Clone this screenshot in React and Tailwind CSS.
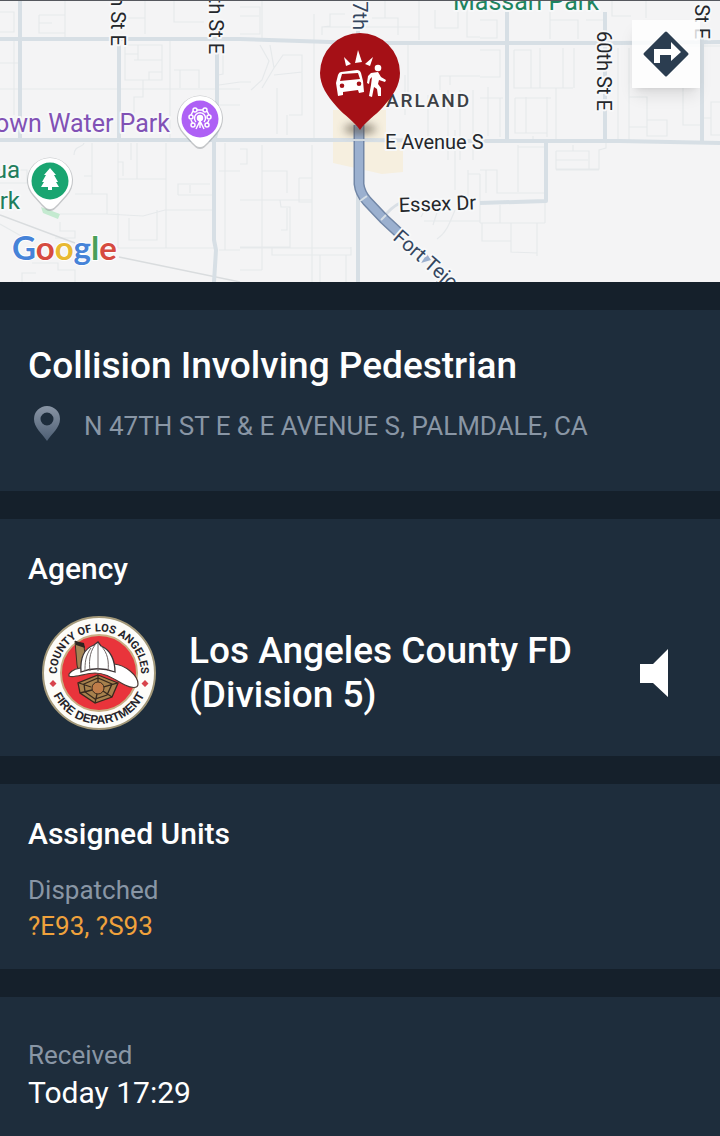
import React from "react";

const minorStreets = [
  "M0 12H14V32H0M0 39H20M0 63H18M0 89H240M14 39V115M39 15H65V33H39V15M39 23H52M65 0V39M125 45H162V80H125V45M125 54H138M138 45V60M134 60H162M149 80V72H162M170 40V138M174 70H199V88M180 70V88M143 80V97H134V115M174 0V22H204M145 0V34M219 85L240 82M219 105H240M218 75L223 74V54M118 18H145",
  "M74 155C74 145 83 148 84 143M92 143V176H84M92 176V194H75M92 194H107V214H60M118 143V179H149M118 162H123V176M137 143V179H166V143M131 143V160M178 195V184H210M190 193V185M178 195H212M219 171H240M60 222V231H75V238H55M107 205V214L143 216L165 210H212M129 218V240H157V210M118 179V248M118 248H215M32 263H58V270H75V282M22 282V273H36M0 170H27V183H0M0 195H18M166 179V248M219 250H240M225 143V250M0 224L23 237",
  "M240 7H260V34H240M240 16H259M262 0V40M314 14V139M312 145V282M322 27H419M322 35V27L330 26V14H345M419 0V40M435 10V28H458V4M467 5V37H480M372 18H398V35M385 0V18M408 45V95M405 75V115M440 90V76H480M450 85V76M448 90V160M460 90V160M473 90V160M455 130V190M428 95V145M468 170V200M468 174H480",
  "M260 45L269 61L262 80L251 90M270 45L274 68L262 88M240 82H251M274 68L283 55H302V72L274 75M277 88V134M289 115H302V60M302 115V90M287 115V135M240 149H247V164H240M262 145V200M262 171H287V193M299 178H312M299 178V202H312M280 200H312M240 200H280L281 207H290V247H240M262 270H240M272 247V255H351V247M320 255V282M346 255V282M287 208V230H281M240 248H351M262 200V270M455 210C449 225 446 233 437 239M441 200L433 225M424 221H480M480 174V223M430 200L421 217",
  "M480 20H497V38H480M480 50H500V77H480M488 87V136M500 98V137M480 98H503M550 0V39M550 20H578V39M586 20H603M514 50H531V88M514 50V88H573M540 48V88M563 48V88M556 88V140M515 98V133H547M547 97V137M526 97V133M515 98H551M533 136V141M574 48V88",
  "M618 48V140M629 48V140M612 0V16H631M646 0V18M629 97H647V127H629M647 120H667V136H647V120M683 88V125H703M703 118H711V102H720M711 118V135H720M687 46H720M518 145V192M518 147H545M480 170H497V193H545M486 193V170M573 145V151M556 151H589V169H556V151M556 160H588M589 169H599V150L606 148V143M556 170H599M480 223H545M545 200V223M500 205V223M482 223V241H511M511 223V252L537 253V223M537 253V256",
];

const mainRoads = [
  "M20 0V140",
  "M119 40V140",
  "M217 50V130L214 142V240L216 250L214 282",
  "M0 39H240L360 43H620L720 42",
  "M0 140H360L480 141H560L620 141L720 143",
  "M358 30V282",
  "M507 0V140",
  "M605 12V140",
  "M702 30V142",
  "M546 143V201L480 203",
];

function PoiPin({ x, y, fill, children }) {
  return (
    <g transform={`translate(${x} ${y})`}>
      <path d="M0 30C-3 30-5 28-8 25L-17 15A23 23 0 1 1 17 15L8 25C5 28 3 30 0 30Z" fill="#6b7075" opacity=".35" />
      <path d="M0 28C-3 28-5 26-8 23L-16 14A22 22 0 1 1 16 14L8 23C5 26 3 28 0 28Z" fill="#fff" />
      <circle r="18.5" fill={fill} />
      {children}
    </g>
  );
}

function CityMap() {
  return (
    <svg
      viewBox="0 0 720 282"
      preserveAspectRatio="xMidYMid slice"
      className="block h-full w-full"
      role="img"
      aria-label="Map of N 47th St E and E Avenue S"
    >
      <defs>
        <filter id="soft" x="-50%" y="-100%" width="200%" height="300%">
          <feGaussianBlur stdDeviation="4" />
        </filter>
      </defs>
      <rect width="720" height="282" fill="#f4f4f5" />
      <path d="M333 110H386V140L403 143V172L382 174L333 163Z" fill="#f6efdf" />
      <g fill="none" stroke="#e6e9eb" strokeWidth="1.2">
        {minorStreets.map((d) => (
          <path key={d} d={d} />
        ))}
      </g>
      <path d="M0 215L75 243M119 257L240 282" fill="none" stroke="#d9dcde" strokeWidth="1.4" />
      <path d="M400 203C394 206 389 210 384 217" fill="none" stroke="#d9dfe5" strokeWidth="3" />
      <g fill="none" stroke="#d7dfe5" strokeWidth="4" strokeLinejoin="round">
        {mainRoads.map((d) => (
          <path key={d} d={d} />
        ))}
      </g>
      <g fill="none" strokeLinejoin="round">
        <path d="M359 125V184Q360 193 367 201L384 219L398 232" stroke="#7287a7" strokeWidth="11" />
        <path d="M359 125V184Q360 193 367 201L384 219L398 232" stroke="#9bb0cf" strokeWidth="8" />
        <path d="M353 140H365M360 201L367 196M381 220L386 215" stroke="#d5dee5" strokeWidth="2" />
      </g>
      <path d="M421 263L427 254L431 260Z" fill="#9bb0cf" />
      <path d="M41 207L60 214L58 219L43 213Z" fill="#c4ead0" />

      <g
        className="font-['Roboto',sans-serif] text-[20px]"
        fill="#24272b"
        stroke="#f7f8f9"
        strokeWidth="4"
        strokeLinejoin="round"
        paintOrder="stroke"
      >
        <text transform="translate(111 46) rotate(90)" textAnchor="end">h St E</text>
        <text transform="translate(209 54) rotate(90)" textAnchor="end">th St E</text>
        <text transform="translate(353 30) rotate(90)" textAnchor="end" fill="#34465f">47th</text>
        <text transform="translate(597 31) rotate(90)">60th St E</text>
        <text transform="translate(695 39) rotate(90)" textAnchor="end">St E</text>
        <text x="471" y="107" textAnchor="end" className="text-[19px] font-medium tracking-widest" fill="#3c4045">ARLAND</text>
        <text x="385" y="149">E Avenue S</text>
        <text transform="translate(399 212) rotate(-2)">Essex Dr</text>
        <text transform="translate(392 239) rotate(41)" fill="#34465f">Fort Tejon</text>
        <text x="453" y="10" className="text-[25px]" fill="#1d8460">Massari Park</text>
        <text x="170" y="132" textAnchor="end" className="text-[25px]" fill="#8151b5">own Water Park</text>
        <text x="20" y="178" textAnchor="end" className="text-[24px]" fill="#217d5c">ua</text>
        <text x="20" y="209" textAnchor="end" className="text-[24px]" fill="#217d5c">rk</text>
      </g>

      <PoiPin x={200} y={119} fill="#ae60f5">
        <g fill="none" stroke="#fff" strokeWidth="1.5">
          <path d="M-3-9H3M-7-8L-9-4M-9 1L-7 5M7-8L9-4M9 1L7 5" />
          <circle cx="-5" cy="-9" r="2" />
          <circle cx="5" cy="-9" r="2" />
          <circle cx="-9" cy="-2" r="2" />
          <circle cx="9" cy="-2" r="2" />
          <circle cx="-7" cy="6" r="2" />
          <circle cx="7" cy="6" r="2" />
          <path d="M-4 3A5.500 5.500 0 1 1 4 3" />
          <path d="M0 0V9M-4 10L0 2L4 10" />
          <circle cy="-1" r="2.500" fill="#fff" />
        </g>
      </PoiPin>
      <PoiPin x={50} y={181} fill="#1aa571">
        <path d="M0-13L6-6H4L8 1H6L9 6H2V9H-2V6H-9L-6 1H-8L-4-6H-6Z" fill="#fff" />
      </PoiPin>

      <ellipse cx="360" cy="129" rx="16" ry="5" fill="#544b3e" opacity=".65" filter="url(#soft)" />
      <path d="M360 130C354 121 345 116 337 107C327 96 320 85 320 73A40 40 0 0 1 400 73C400 85 393 96 383 107C375 116 366 121 360 130Z" fill="#a51016" />
      <g fill="#fff">
        <path d="M358 50L362 62L355 63ZM344 57L351 64L346 66ZM373 57L370 66L365 64Z" />
        <path
          fillRule="evenodd"
          d="M341 72L357 70Q360 70 361 73L363 81L364 92L359 93L358 90L343 92V95L338 96L336 83L338 75Q339 72 341 72ZM342 74L340 81L360 79L358 73ZM342 83.500A2.300 2.300 0 1 0 342 88.100A2.300 2.300 0 1 0 342 83.500ZM359 81.500A2.300 2.300 0 1 0 359 86.100A2.300 2.300 0 1 0 359 81.500Z"
        />
        <circle cx="378" cy="68" r="3.300" />
        <path d="M371 73L378 72L381 77L386 80L385 82L379 80L378 84L381 88L381 96H378L377 89L374 87L372 97L369 96L371 85L372 77L370 79L369 84L367 83L368 76Z" />
      </g>

      <text
        x="12"
        y="260"
        className="font-['Lato',sans-serif] text-[33px] font-bold"
        stroke="#fff"
        strokeWidth="2"
        paintOrder="stroke"
      >
        <tspan fill="#4683d8">G</tspan>
        <tspan fill="#d64b40">o</tspan>
        <tspan fill="#e8b931">o</tspan>
        <tspan fill="#4683d8">g</tspan>
        <tspan fill="#4a9f58">l</tspan>
        <tspan fill="#d64b40">e</tspan>
      </text>
      <rect width="720" height="1" fill="#55585e" />
    </svg>
  );
}

function DirectionsIcon() {
  return (
    <svg viewBox="0 0 48 48" className="size-12" aria-hidden="true">
      <path d="M24 3L45 24L24 45L3 24Z" fill="#2b3d50" stroke="#2b3d50" strokeWidth="3" strokeLinejoin="round" />
      <path d="M12 33V19H29V12L39 22L29 31V25H18V33Z" fill="#fff" />
    </svg>
  );
}

function LocationIcon() {
  return (
    <svg viewBox="0 0 26 35" className="h-[35px] w-[26px] shrink-0" aria-hidden="true">
      <defs>
        <linearGradient id="pinShade" x1="0" y1="0" x2="0" y2="1">
          <stop offset="0" stopColor="#8995a5" />
          <stop offset="1" stopColor="#4d5e73" />
        </linearGradient>
      </defs>
      <path
        fillRule="evenodd"
        fill="url(#pinShade)"
        d="M13 0A13 13 0 0 1 26 13C26 22 18 27 13 35C8 27 0 22 0 13A13 13 0 0 1 13 0ZM13 6.500A6.500 6.500 0 1 0 13 19.500A6.500 6.500 0 1 0 13 6.500Z"
      />
    </svg>
  );
}

function DepartmentSeal() {
  return (
    <svg viewBox="0 0 116 116" className="size-[116px] shrink-0" role="img" aria-label="County of Los Angeles Fire Department">
      <defs>
        <path id="sealTop" d="M22 80A42 42 0 1 1 94 80" />
        <path id="sealBottom" d="M10 74A50.500 50.500 0 0 0 106 74" />
      </defs>
      <circle cx="58" cy="58" r="56" fill="#fdfcf8" stroke="#a39879" strokeWidth="2" />
      <circle cx="58" cy="58" r="38" fill="#e9343b" stroke="#c9ad83" strokeWidth="2" />
      <g fill="#26242a" textAnchor="middle">
        <text className="font-['Roboto',sans-serif] text-[11px] font-bold">
          <textPath href="#sealTop" startOffset="50%">COUNTY OF LOS ANGELES</textPath>
        </text>
        <text className="font-['Liberation_Sans',sans-serif] text-[12px] font-bold">
          <textPath href="#sealBottom" startOffset="50%">FIRE DEPARTMENT</textPath>
        </text>
      </g>
      <path d="M12 65L15.500 68.500L12 72L8.500 68.500ZM104 65L107.500 68.500L104 72L100.500 68.500Z" fill="#d8434b" />
      <path d="M34 26L43 31L46 57L38 60L36 50Z" fill="#a48455" stroke="#3c2e22" strokeWidth="1" />
      <path d="M34 26L43 28L44 33L35 30Z" fill="#2c2420" />
      <path d="M28 59C33 52 42 52 50 53L73 49C84 50 97 60 97 69C97 74 90 73 84 70C74 65 66 58 54 58C44 58 32 64 28 61Z" fill="#fff" stroke="#4a3833" strokeWidth="1.200" />
      <path d="M40 57C39 44 42 34 53 30L57 27L60 31C70 35 74 46 74 57C63 53 50 53 40 57Z" fill="#fff" stroke="#3c3436" strokeWidth="1.300" />
      <path d="M54 30C48 38 48 48 49 56M57 28V56M60 31C67 38 68 47 67 56M50 33C44 41 44 49 44 56" fill="none" stroke="#6e6666" strokeWidth="1" />
      <path d="M57 60L77 68L71 82L54 88L39 78L37 68Z" fill="#a7814d" stroke="#38291d" strokeWidth="1.300" />
      <path d="M43 69L57 63L71 69L66 80L54 84L44 77ZM38 68L50 72M76 68L62 72M39 78L51 75M71 82L62 76M57 60V67M54 88L56 79" fill="none" stroke="#38291d" strokeWidth="1.300" />
      <circle cx="57" cy="73" r="6" fill="#bf7c49" stroke="#38291d" strokeWidth="1" />
    </svg>
  );
}

export default function App() {
  return (
    <main className="flex min-h-screen flex-col gap-7 bg-[#15202b] font-['Roboto',sans-serif] text-white">
      <div className="relative h-[282px] w-full overflow-hidden bg-[#f4f5f6]">
        <CityMap />
        <button
          type="button"
          aria-label="Directions"
          className="absolute top-5 right-5 flex size-[68px] items-center justify-center bg-white/80 shadow-lg"
        >
          <DirectionsIcon />
        </button>
      </div>

      <section className="bg-[#1e2d3c] px-7 pt-8 pb-[45px]">
        <h1 className="text-[37px] leading-12 font-medium">Collision Involving Pedestrian</h1>
        <div className="mt-4 flex items-start gap-6 pl-[6px]">
          <LocationIcon />
          <p className="text-[26px] leading-10 text-[#8996a5]">N 47TH ST E &amp; E AVENUE S, PALMDALE, CA</p>
        </div>
      </section>

      <section className="bg-[#1e2d3c] px-7 pt-8 pb-[25px]">
        <h2 className="text-[30px] leading-9 font-medium">Agency</h2>
        <div className="mt-7 flex items-center pr-6 pl-[13px]">
          <DepartmentSeal />
          <p className="ml-8 grow text-[37px] leading-11 font-medium">
            Los Angeles County FD
            <br />
            (Division 5)
          </p>
          <button type="button" aria-label="Play audio" className="shrink-0">
            <svg viewBox="0 0 28 48" className="h-12 w-7" aria-hidden="true">
              <path d="M0 15H13L28 0V48L13 34H0Z" fill="#fff" />
            </svg>
          </button>
        </div>
      </section>

      <section className="bg-[#1e2d3c] px-7 pt-8 pb-[25px]">
        <h2 className="text-[30px] leading-9 font-medium">Assigned Units</h2>
        <p className="mt-5 text-[26px] leading-9 text-[#8996a5]">Dispatched</p>
        <p className="text-[26px] leading-9 text-[#f0a23c]">?E93, ?S93</p>
      </section>

      <section className="grow bg-[#1e2d3c] px-7 pt-10">
        <p className="text-[26px] leading-9 text-[#8996a5]">Received</p>
        <p className="text-[30px] leading-10">Today 17:29</p>
      </section>
    </main>
  );
}
